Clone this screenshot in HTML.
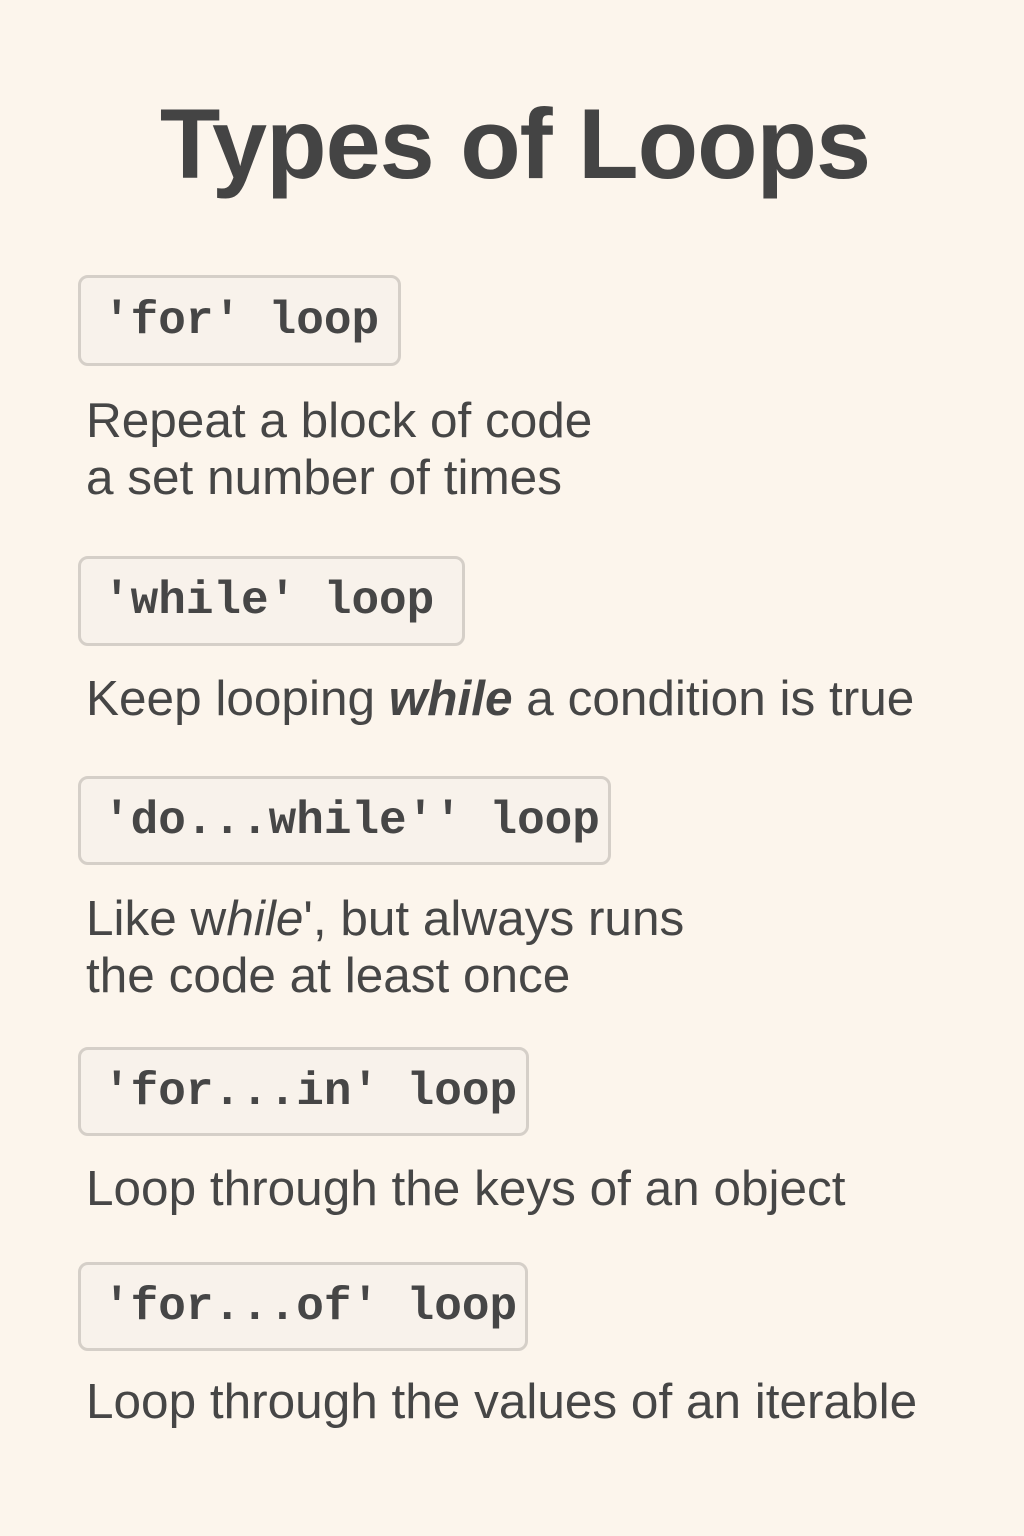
<!DOCTYPE html>
<html><head><meta charset="utf-8"><style>
html,body{margin:0;padding:0}
body{width:1024px;height:1536px;background:#fcf5ec;position:relative;overflow:hidden;color:#454545;font-family:"Liberation Sans",sans-serif}
.t{position:absolute;left:0;width:1024px;text-align:center;top:84px;font-size:99px;font-weight:bold;letter-spacing:-1px;color:#444;line-height:120px;padding-left:6px;box-sizing:border-box}
.b{position:absolute;left:78px;box-sizing:border-box;border:3px solid #d5cfc8;border-radius:10px;background:#f8f2eb;font-family:"Liberation Mono",monospace;font-weight:bold;font-size:46px;display:flex;align-items:center;padding-left:22px;color:#464646;white-space:pre}
.d{position:absolute;left:86px;font-size:49.5px;line-height:57px;letter-spacing:0;white-space:pre;color:#464646}
</style></head><body>
<div class="t">Types of Loops</div>
<div class="b" style="top:275px;height:91px;width:323px">'for' loop</div>
<div class="d" style="top:392px">Repeat a block of code
a set number of times</div>
<div class="b" style="top:556px;height:90px;width:387px">'while' loop</div>
<div class="d" style="top:670px">Keep looping <b><i>while</i></b> a condition is true</div>
<div class="b" style="top:776px;height:89px;width:533px">'do...while'' loop</div>
<div class="d" style="top:890px">Like w<i>hile</i>', but always runs
the code at least once</div>
<div class="b" style="top:1047px;height:89px;width:451px">'for...in' loop</div>
<div class="d" style="top:1160px">Loop through the keys of an object</div>
<div class="b" style="top:1262px;height:89px;width:450px">'for...of' loop</div>
<div class="d" style="top:1373px">Loop through the values of an iterable</div>
</body></html>
